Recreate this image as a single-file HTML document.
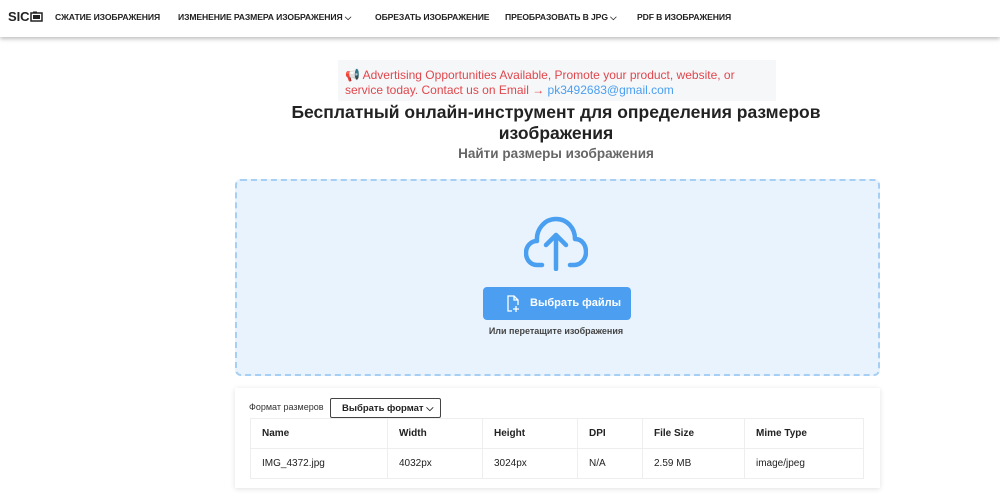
<!DOCTYPE html>
<html><head><meta charset="utf-8"><style>
*{margin:0;padding:0;box-sizing:border-box}
body{width:1000px;height:502px;background:#fff;font-family:"Liberation Sans","DejaVu Sans",sans-serif;position:relative;overflow:hidden;color:#222}
.nav{position:absolute;left:0;top:0;width:1000px;height:37px;background:#fff;box-shadow:0 2px 4px rgba(0,0,0,.25)}
.nav span{position:absolute;top:12px;font-size:8.6px;font-weight:bold;color:#222;white-space:nowrap;letter-spacing:-.1px}
.ab{position:absolute}
.ad{left:338px;top:60px;width:438px;height:41px;background:#f6f7f9;padding:8px 40px 0 7px;font-size:12px;line-height:15px;color:#e0474c}
h1{position:absolute;left:0;width:1112px;top:102px;text-align:center;font-size:17.5px;line-height:21px;font-weight:bold;color:#222}
.sub{left:0;width:1112px;top:146px;text-align:center;font-size:13.5px;font-weight:bold;color:#666}
.drop{left:235px;top:179px;width:645px;height:197px;background:#e9f3fd;border:2px dashed #a6cff3;border-radius:6px}
.btn{left:483px;top:287px;width:148px;height:33px;background:#4c9ff0;border-radius:4px;color:#fff;font-size:11px;font-weight:bold}
.card{left:235px;top:388px;width:645px;height:100px;background:#fff;box-shadow:0 1px 5px rgba(0,0,0,.12)}
table{position:absolute;left:250px;top:418px;width:614px;border-collapse:collapse;font-size:10px}
td{border:1px solid #eee;height:30px;padding-left:11px}
tr:first-child td{font-weight:bold}
</style></head><body>
<div class="nav">
<span style="left:8px;top:9px;font-size:13px">SIC</span>
<svg class="ab" style="left:30px;top:11px" width="13" height="11" viewBox="0 0 13 11"><rect x="1" y="2" width="11" height="8" fill="none" stroke="#222" stroke-width="1.5"/><rect x="3" y="4" width="7" height="4" fill="#222"/><path d="M3 1h4" stroke="#222"/></svg>
<span style="left:55px">СЖАТИЕ ИЗОБРАЖЕНИЯ</span>
<span style="left:178px">ИЗМЕНЕНИЕ РАЗМЕРА ИЗОБРАЖЕНИЯ ⌵</span>
<span style="left:375px">ОБРЕЗАТЬ ИЗОБРАЖЕНИЕ</span>
<span style="left:505px">ПРЕОБРАЗОВАТЬ В JPG ⌵</span>
<span style="left:637px">PDF В ИЗОБРАЖЕНИЯ</span>
</div>
<div class="ab ad">📢 Advertising Opportunities Available, Promote your product, website, or service today. Contact us on Email → <span style="color:#4a9ff0">pk3492683@gmail.com</span></div>
<h1>Бесплатный онлайн-инструмент для определения размеров<br>изображения</h1>
<div class="ab sub">Найти размеры изображения</div>
<div class="ab drop"></div>
<svg class="ab" style="left:524px;top:213px" width="64" height="58" viewBox="0 0 64 58"><path d="M18 52H13C6 52 2 46 2 40C2 33 7 28 13 28C12 17 20 6 32 6C43 6 51 15 51 26C58 26 62 32 62 39C62 46 57 52 50 52H46" fill="none" stroke="#4a9ff0" stroke-width="4.5" stroke-linecap="round" stroke-linejoin="round"/><path d="M32 56V22M22 32L32 22L42 32" fill="none" stroke="#4a9ff0" stroke-width="4.5" stroke-linecap="round" stroke-linejoin="round"/></svg>
<div class="ab btn"><svg class="ab" style="left:23px;top:8px" width="14" height="18" viewBox="0 0 14 18"><path d="M6 16H2V1h6l4 4v5M8 1v4h4M10 11v6M7 14h6" fill="none" stroke="#fff" stroke-width="1.3"/></svg><span class="ab" style="left:47px;top:10px">Выбрать файлы</span></div>
<div class="ab" style="left:0;width:1112px;top:326px;text-align:center;font-size:9px;font-weight:bold;color:#444">Или перетащите изображения</div>
<div class="ab card"></div>
<div class="ab" style="left:249px;top:402px;font-size:9px;color:#333">Формат размеров</div>
<div class="ab" style="left:330px;top:398px;width:111px;height:20px;border:1px solid #444;border-radius:2px;font-size:9.5px;font-weight:bold;padding:4px 0 0 11px">Выбрать формат ⌵</div>
<table>
<tr><td style="width:137px">Name</td><td style="width:95px">Width</td><td style="width:95px">Height</td><td style="width:65px">DPI</td><td style="width:102px">File Size</td><td>Mime Type</td></tr>
<tr><td>IMG_4372.jpg</td><td>4032px</td><td>3024px</td><td>N/A</td><td>2.59 MB</td><td>image/jpeg</td></tr>
</table>
</body></html>
